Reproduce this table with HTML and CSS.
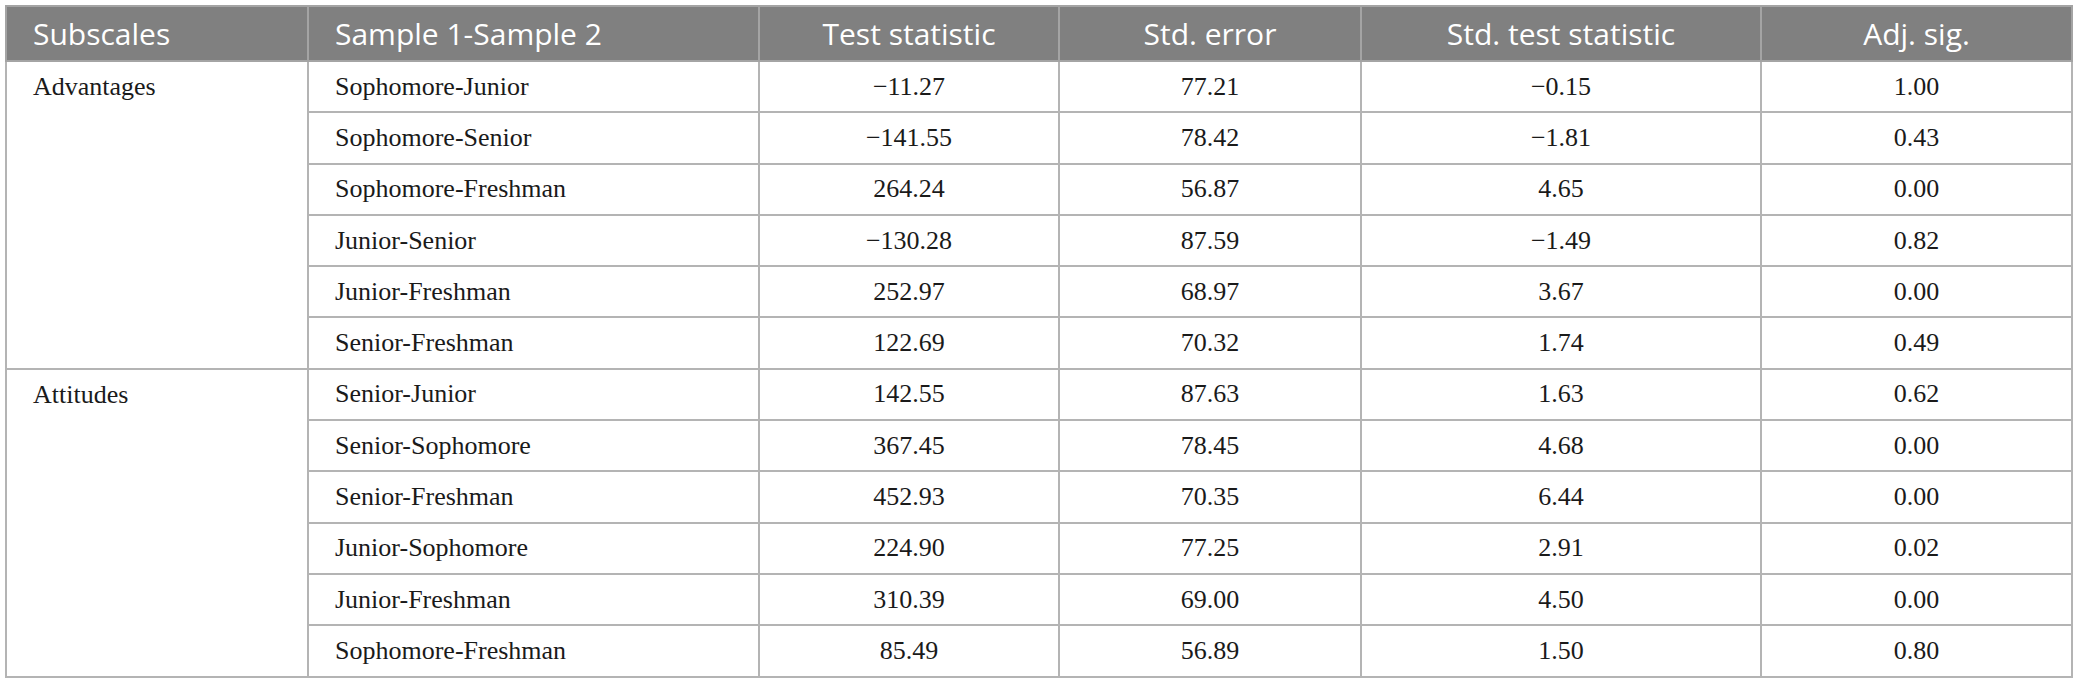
FILE: index.html
```html
<!DOCTYPE html>
<html lang="en">
<head>
<meta charset="utf-8">
<title>Pairwise comparisons</title>
<link rel="stylesheet" href="styles.css">
</head>
<body>
<table class="stats">
  <colgroup>
    <col class="c-sub"><col class="c-pair"><col class="c-test"><col class="c-err"><col class="c-std"><col class="c-sig">
  </colgroup>
  <thead>
    <tr>
      <th class="left">Subscales</th>
      <th class="left">Sample 1-Sample 2</th>
      <th>Test statistic</th>
      <th>Std. error</th>
      <th>Std. test statistic</th>
      <th>Adj. sig.</th>
    </tr>
  </thead>
  <tbody>
    <tr><td class="sub" rowspan="6">Advantages</td><td class="pair">Sophomore-Junior</td><td>−11.27</td><td>77.21</td><td>−0.15</td><td>1.00</td></tr>
    <tr><td class="pair">Sophomore-Senior</td><td>−141.55</td><td>78.42</td><td>−1.81</td><td>0.43</td></tr>
    <tr><td class="pair">Sophomore-Freshman</td><td>264.24</td><td>56.87</td><td>4.65</td><td>0.00</td></tr>
    <tr><td class="pair">Junior-Senior</td><td>−130.28</td><td>87.59</td><td>−1.49</td><td>0.82</td></tr>
    <tr><td class="pair">Junior-Freshman</td><td>252.97</td><td>68.97</td><td>3.67</td><td>0.00</td></tr>
    <tr><td class="pair">Senior-Freshman</td><td>122.69</td><td>70.32</td><td>1.74</td><td>0.49</td></tr>
  </tbody>
  <tbody>
    <tr><td class="sub" rowspan="6">Attitudes</td><td class="pair">Senior-Junior</td><td>142.55</td><td>87.63</td><td>1.63</td><td>0.62</td></tr>
    <tr><td class="pair">Senior-Sophomore</td><td>367.45</td><td>78.45</td><td>4.68</td><td>0.00</td></tr>
    <tr><td class="pair">Senior-Freshman</td><td>452.93</td><td>70.35</td><td>6.44</td><td>0.00</td></tr>
    <tr><td class="pair">Junior-Sophomore</td><td>224.90</td><td>77.25</td><td>2.91</td><td>0.02</td></tr>
    <tr><td class="pair">Junior-Freshman</td><td>310.39</td><td>69.00</td><td>4.50</td><td>0.00</td></tr>
    <tr><td class="pair">Sophomore-Freshman</td><td>85.49</td><td>56.89</td><td>1.50</td><td>0.80</td></tr>
  </tbody>
</table>
</body>
</html>
```

FILE: styles.css
```css
html, body {
  background: #ffffff;
}
body {
  margin: 5px;
}
.stats {
  border-collapse: collapse;
  table-layout: fixed;
  width: 2067px;
  border: 2px solid #a8a8a8;
}
.c-sub { width: 302px; }
.c-pair { width: 451px; }
.c-test { width: 300px; }
.c-err { width: 302px; }
.c-std { width: 400px; }
.c-sig { width: 311px; }

.stats th {
  background: #808080;
  color: #ffffff;
  font-family: "Open Sans", "Noto Sans", sans-serif;
  font-weight: 400;
  font-size: 30px;
  height: 53px;
  padding: 0 20px;
  text-align: center;
  border: 2px solid #a4a4a4;
  white-space: nowrap;
}
.stats th.left {
  text-align: left;
  padding-left: 26px;
}
.stats td {
  font-family: "Liberation Serif", "Times New Roman", serif;
  font-size: 26px;
  color: #1a1a1a;
  height: 49.3px;
  padding: 0 20px;
  text-align: center;
  vertical-align: middle;
  border: 2px solid #b4b4b4;
  white-space: nowrap;
}
.stats td.pair {
  text-align: left;
  padding-left: 26px;
}
.stats td.sub {
  text-align: left;
  vertical-align: top;
  line-height: 49px;
  padding-left: 26px;
}
```
